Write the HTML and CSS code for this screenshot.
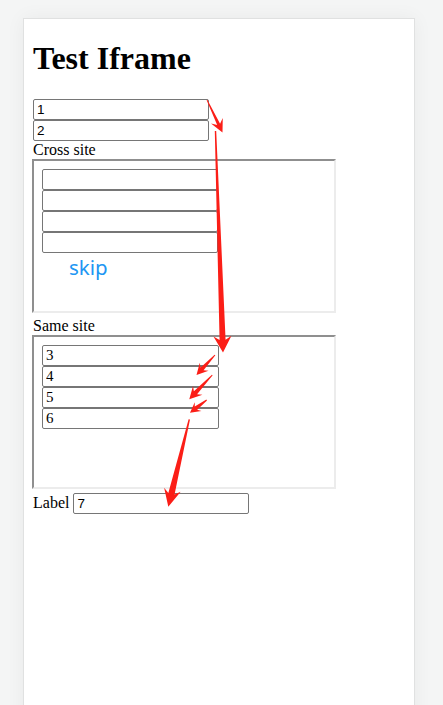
FILE: index.html
```html
<!DOCTYPE html>
<html>
<head>
<meta charset="utf-8">
<link rel="stylesheet" href="styles.css">
</head>
<body>
<div class="card">
  <h1 class="title">Test Iframe</h1>
  <input class="inp" type="text" value="1">
  <input class="inp" type="text" value="2">
  <div class="label">Cross site</div>
  <div class="frame">
    <input class="inp" type="text">
    <input class="inp" type="text">
    <input class="inp" type="text">
    <input class="inp" type="text">
    <div class="skip">skip</div>
  </div>
  <div class="label">Same site</div>
  <div class="frame">
    <input class="inp serif" type="text" value="3">
    <input class="inp serif" type="text" value="4">
    <input class="inp serif" type="text" value="5">
    <input class="inp serif" type="text" value="6">
  </div>
  <div class="row">Label <input class="inp inline" type="text" value="7"></div>
</div>
<svg class="arrows" width="443" height="705" viewBox="0 0 443 705">
  <g fill="#fb1e17">
    <polygon transform="translate(207,100) rotate(64.5)" points="0,-0.4 27,-1.6 23,-6.5 36,0 23,6.5 27,1.6 0,0.4"/>
    <polygon transform="translate(215.5,131) rotate(88.06)" points="0,-0.7 209,-3 205.2,-9 221.6,0 205.2,9 209,3 0,0.7"/>
    <polygon transform="translate(215,355) rotate(132.8)" points="0,-0.5 19,-2 16,-6 27.2,0 16,6 19,2 0,0.5"/>
    <polygon transform="translate(212.3,375) rotate(133.4)" points="0,-0.5 24.5,-2.2 21.2,-6.5 33.5,0 21.2,6.5 24.5,2.2 0,0.5"/>
    <polygon transform="translate(206.7,400) rotate(142.7)" points="0,-0.5 13.5,-2 10.8,-5.5 21,0 10.8,5.5 13.5,2 0,0.5"/>
    <polygon transform="translate(189.3,419.3) rotate(103.5)" points="0,-0.7 76.5,-3.2 72.4,-8.5 89.9,0 72.4,8.5 76.5,3.2 0,0.7"/>
  </g>
</svg>
</body>
</html>
```
FILE: styles.css
```css
html, body {
  margin: 0;
  padding: 0;
  background: #f4f5f5;
  height: 705px;
  overflow: hidden;
}
body {
  position: relative;
  font-family: "Liberation Serif", serif;
  font-size: 16px;
  color: #000;
}
.card {
  margin: 18px 0 0 23px;
  width: 373px;
  min-height: 720px;
  padding: 0 8px 0 9px;
  background: #fff;
  border: 1px solid #e0e1e1;
  box-shadow: 0 0 18px rgba(0, 0, 0, 0.05);
}
.title {
  font-family: "Liberation Serif", serif;
  font-size: 32px;
  font-weight: bold;
  margin: 21.44px 0;
  line-height: normal;
}
.inp {
  display: block;
  box-sizing: border-box;
  width: 176px;
  height: 21px;
  margin: 0;
  padding: 1px 3px;
  border: 1px solid #767676;
  border-radius: 2px;
  background: #fff;
  font-family: "Liberation Sans", Arial, sans-serif;
  font-size: 13.5px;
  color: #000;
  outline: none;
}
.inp.serif {
  width: 177px;
  font-family: "Liberation Serif", serif;
  font-size: 15px;
}
.inp.inline {
  display: inline-block;
  vertical-align: baseline;
}
.label {
  line-height: normal;
}
.frame {
  box-sizing: content-box;
  width: 284px;
  height: 134px;
  padding: 8px;
  border-style: solid;
  border-width: 2px;
  border-color: #8f8f8f #ececec #ececec #8f8f8f;
  margin-left: -1px;
  margin-bottom: 4.2px;
  overflow: hidden;
}
.skip {
  padding-left: 27px;
  font-family: "Noto Sans", sans-serif;
  font-size: 20.5px;
  color: #2196f3;
  line-height: normal;
}
.row {
  line-height: normal;
}
.arrows {
  position: absolute;
  left: 0;
  top: 0;
  pointer-events: none;
}
```
